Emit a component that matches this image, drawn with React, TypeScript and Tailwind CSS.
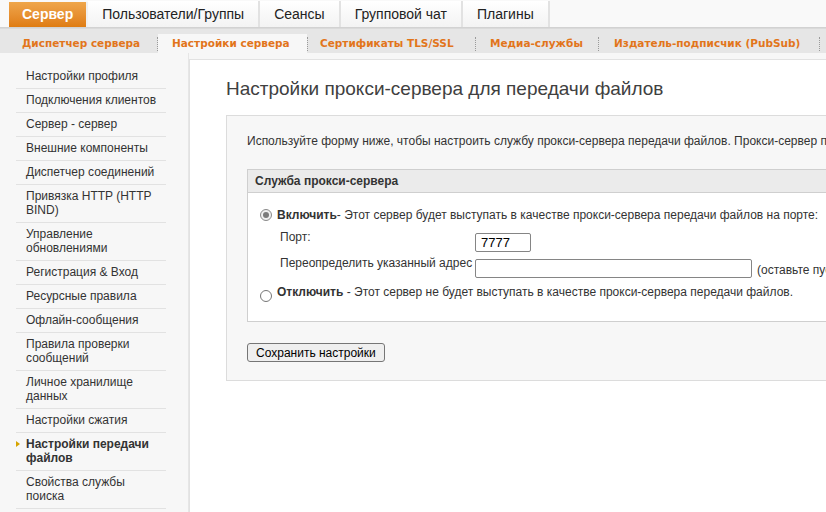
import React from 'react';

const topTabs = ['Пользователи/Группы', 'Сеансы', 'Групповой чат', 'Плагины'];

const subTabs = [
  { label: 'Диспетчер сервера', cls: 'w-[150px] pl-[15px]' },
  { label: 'Настройки сервера', cls: 'w-[149px] pl-[14px] bg-[#f7f7f7]' },
  { label: 'Сертификаты TLS/SSL', cls: 'w-[167px] pl-[12px]' },
  { label: 'Медиа-службы', cls: 'w-[122px] pl-[14px]' },
  { label: 'Издатель-подписчик (PubSub)', cls: 'w-[220px] pl-[15px]' },
];

const sideItems = [
  'Настройки профиля',
  'Подключения клиентов',
  'Сервер - сервер',
  'Внешние компоненты',
  'Диспетчер соединений',
  'Привязка HTTP (HTTP BIND)',
  'Управление обновлениями',
  'Регистрация & Вход',
  'Ресурсные правила',
  'Офлайн-сообщения',
  'Правила проверки сообщений',
  'Личное хранилище данных',
  'Настройки сжатия',
  'Настройки передачи файлов',
  'Свойства службы поиска',
];

const ACTIVE_SIDE = 'Настройки передачи файлов';

function Radio({ checked }: { checked?: boolean }) {
  if (checked) {
    return (
      <span className="w-[12px] h-[12px] shrink-0 rounded-full border border-[#8a8a8a] bg-[#efefef] flex items-center justify-center">
        <span className="w-[6px] h-[6px] rounded-full bg-[#7a7a7a]" />
      </span>
    );
  }
  return <span className="block w-[12px] h-[12px] shrink-0 rounded-full border border-[#767676] bg-white" />;
}

export default function App() {
  return (
    <div className="w-[826px] h-[512px] overflow-hidden bg-[#f7f7f7] text-[#333] font-['Liberation_Sans',Arial,sans-serif]">
      {/* main tabs */}
      <div className="h-[28px] flex items-end bg-[#f9f9f9] border-b border-[#d2d2d2] pl-[9px]">
        <div className="h-[25px] px-[13px] flex items-center text-[14px] font-bold text-white bg-gradient-to-b from-[#efa64a] to-[#df7c10] border-r-2 border-[#f0f0f0]">
          Сервер
        </div>
        {topTabs.map((t) => (
          <div
            key={t}
            className="h-[26px] px-[14px] flex items-center text-[14px] text-[#222] bg-gradient-to-b from-white to-[#f3f3f3] border-r-2 border-[#e2e2e2]"
          >
            {t}
          </div>
        ))}
      </div>

      {/* sub tabs */}
      <div className="h-[25px] flex items-end bg-[#e6e6e6] border-t border-[#dadada] pl-[7px] whitespace-nowrap font-['DejaVu_Sans',Verdana,sans-serif] text-[10.5px] font-bold text-[#e2751b]">
        {subTabs.map((s, i) => (
          <React.Fragment key={s.label}>
            {i > 0 && <span className="shrink-0 self-center mt-[6px] h-[14px] border-l border-dotted border-[#9a9a9a]" />}
            <div className={'shrink-0 h-[19px] flex items-center ' + s.cls}>{s.label}</div>
          </React.Fragment>
        ))}
        <span className="shrink-0 self-center mt-[6px] h-[14px] border-l border-dotted border-[#9a9a9a]" />
      </div>

      <div className="flex">
        {/* sidebar */}
        <div className="w-[189px] shrink-0 pt-[12px] border-r border-[#e6e6e6] h-[460px]">
          <ul className="ml-[16px] w-[150px]">
            {sideItems.map((item) => {
              const active = item === ACTIVE_SIDE;
              return (
                <li
                  key={item}
                  className={
                    'relative pl-[10px] pt-[4px] pb-[5px] text-[12px] leading-[14px] border-b border-[#e2e2e2] ' +
                    (active ? 'font-bold text-[#333]' : 'text-[#333]')
                  }
                >
                  {active && (
                    <span className="absolute left-0 top-[8px] w-0 h-0 border-y-[3px] border-y-transparent border-l-[4px] border-l-[#d6a400]" />
                  )}
                  {item}
                </li>
              );
            })}
          </ul>
        </div>

        {/* content */}
        <div className="flex-1 mt-[6px] bg-white border-t border-l border-[#e2e2e2] pl-[36px] pt-[18px] min-h-[460px]">
          <h1 className="text-[19px] leading-[22px] text-[#404040] whitespace-nowrap">
            Настройки прокси-сервера для передачи файлов
          </h1>

          <div className="mt-[15px] w-[700px] bg-[#f7f7f7] border border-[#dcdcdc] pl-[20px] pt-[18px] pb-[16px]">
            <p className="text-[12px] leading-[14px] whitespace-nowrap">
              Используйте форму ниже, чтобы настроить службу прокси-сервера передачи файлов. Прокси-сервер позволяет
              передавать файлы между клиентами.
            </p>

            <div className="mt-[21px] border border-[#cfcfcf] bg-white">
              <div className="h-[23px] flex items-center pl-[7px] bg-[#ebebeb] border-b border-[#cfcfcf] text-[12px] font-bold text-[#333]">
                Служба прокси-сервера
              </div>
              <div className="pl-[12px] pt-[15px] pb-[19px] text-[12px] leading-[14px] whitespace-nowrap">
                <div className="flex items-center gap-[5px]">
                  <Radio checked />
                  <span>
                    <b>Включить</b>- Этот сервер будет выступать в качестве прокси-сервера передачи файлов на порте:
                  </span>
                </div>
                <div className="flex items-start pl-[20px] mt-[8px]">
                  <span className="w-[195px] shrink-0">Порт:</span>
                  <div className="mt-[3px] w-[56px] h-[19px] border border-[#858585] rounded-[2px] flex items-center pl-[5px] text-[13px] text-black">
                    7777
                  </div>
                </div>
                <div className="flex items-start pl-[20px] mt-[4px]">
                  <span className="w-[195px] shrink-0">Переопределить указанный адрес</span>
                  <div className="mt-[3px] flex items-center">
                    <div className="w-[277px] h-[19px] border border-[#858585] rounded-[2px] bg-white" />
                    <span className="ml-[5px] mt-[2px]">(оставьте пустым для значения по умолчанию)</span>
                  </div>
                </div>
                <div className="flex items-start gap-[5px] mt-[7px]">
                  <span className="block mt-[5px]">
                    <Radio />
                  </span>
                  <span>
                    <b>Отключить</b> - Этот сервер не будет выступать в качестве прокси-сервера передачи файлов.
                  </span>
                </div>
              </div>
            </div>

            <button className="mt-[21px] h-[19px] px-[8px] text-[12px] text-black bg-[#efefef] border border-[#767676] rounded-[3px] font-['Liberation_Sans',Arial,sans-serif]">
              Сохранить настройки
            </button>
          </div>
        </div>
      </div>
    </div>
  );
}
